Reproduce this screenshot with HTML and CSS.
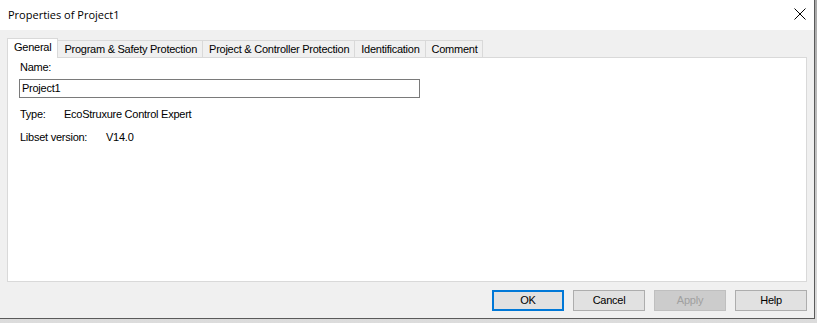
FILE: index.html
```html
<!DOCTYPE html>
<html lang="en">
<head>
    <meta charset="UTF-8">
    <title>Properties of Project1</title>
    <link rel="stylesheet" href="styles.css">
</head>
<body>
    <div class="dialog">
        <div class="titlebar">
            <span class="title">Properties of Project1</span>
            <svg class="close" width="12" height="12" viewBox="0 0 12 12">
                <path d="M0.5 0.5 L11.5 11.5 M11.5 0.5 L0.5 11.5" stroke="#000" stroke-width="1"/>
            </svg>
        </div>
        <div class="content">
            <div class="tabs">
                <div class="tab active">General</div>
                <div class="tab">Program &amp; Safety Protection</div>
                <div class="tab">Project &amp; Controller Protection</div>
                <div class="tab">Identification</div>
                <div class="tab">Comment</div>
            </div>
            <div class="panel">
                <div class="label">Name:</div>
                <div class="input">Project1</div>
                <div class="row type-row"><span class="key">Type:</span><span>EcoStruxure Control Expert</span></div>
                <div class="row libset-row"><span class="key">Libset version:</span><span>V14.0</span></div>
            </div>
            <div class="buttons">
                <div class="btn default">OK</div>
                <div class="btn">Cancel</div>
                <div class="btn disabled">Apply</div>
                <div class="btn">Help</div>
            </div>
        </div>
    </div>
</body>
</html>
```

FILE: styles.css
```css
html, body {
    margin: 0;
    padding: 0;
}
body {
    width: 817px;
    height: 323px;
    background: linear-gradient(#a8a8a8, #dcdcdc);
    font-family: "Liberation Sans", Arial, sans-serif;
    font-size: 11px;
    letter-spacing: -0.25px;
    color: #000;
    overflow: hidden;
}
.dialog {
    width: 814px;
    height: 318px;
    background: #f0f0f0;
    border-right: 1px solid #5a5a5a;
    border-bottom: 1px solid #5a5a5a;
    display: flex;
    flex-direction: column;
}
.titlebar {
    height: 30px;
    background: #fff;
    display: flex;
    align-items: center;
    justify-content: space-between;
    padding: 0 8px 0 8px;
}
.title {
    font-family: "Open Sans", "Liberation Sans", sans-serif;
    font-size: 11px;
    letter-spacing: 0;
    margin-top: -2px;
}
.close {
    margin-top: -2px;
}
.content {
    flex: 1;
    padding: 8px 7px 0 7px;
    display: flex;
    flex-direction: column;
}
.tabs {
    display: flex;
    align-items: flex-end;
    height: 19px;
    position: relative;
    z-index: 1;
}
.tab {
    height: 16px;
    line-height: 16px;
    padding: 0 5px 0 6px;
    border: 1px solid #d9d9d9;
    border-bottom: none;
    border-left: none;
    background: #f0f0f0;
    white-space: nowrap;
}
.tab.active {
    height: 19px;
    line-height: 17px;
    background: #fff;
    border-left: 1px solid #d9d9d9;
    padding: 0 6px 0 6px;
    margin-bottom: -1px;
}
.panel {
    height: 223px;
    background: #fff;
    border: 1px solid #d9d9d9;
    padding: 0 0 0 11px;
}
.label {
    margin-top: 2px;
    padding-left: 1px;
    height: 15px;
    line-height: 15px;
}
.input {
    width: 397px;
    height: 17px;
    line-height: 17px;
    border: 1px solid #7a7a7a;
    padding-left: 2px;
    margin-top: 4px;
}
.row {
    display: flex;
    padding-left: 1px;
    height: 15px;
    line-height: 15px;
}
.type-row {
    margin-top: 9px;
}
.libset-row {
    margin-top: 8px;
}
.type-row .key {
    width: 44px;
}
.libset-row .key {
    width: 86px;
}
.buttons {
    display: flex;
    justify-content: flex-end;
    gap: 9px;
    padding-top: 8px;
}
.btn {
    width: 70px;
    height: 19px;
    line-height: 19px;
    text-align: center;
    background: #e1e1e1;
    border: 1px solid #adadad;
}
.btn.default {
    border: 2px solid #0078d7;
    width: 68px;
    height: 17px;
    line-height: 17px;
}
.btn.disabled {
    background: #cccccc;
    border-color: #bfbfbf;
    color: #a0a0a0;
}
```
